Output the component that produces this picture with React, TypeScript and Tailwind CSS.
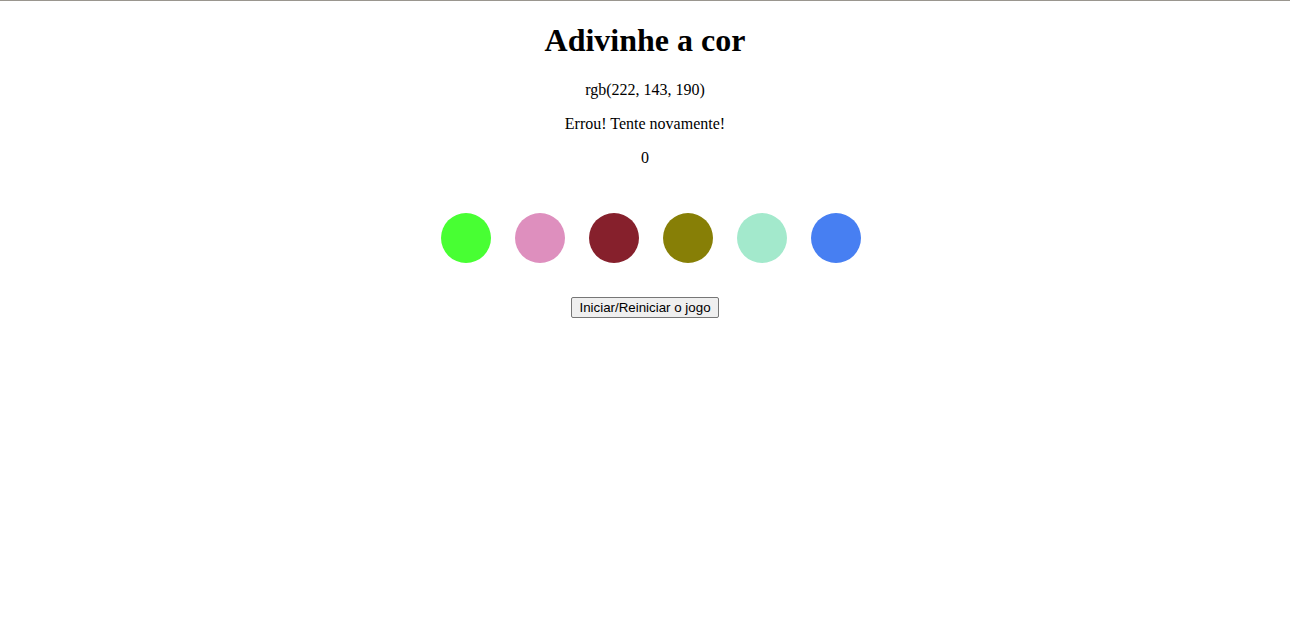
const colors = ["#48ff33", "#de8fbe", "#86202c", "#877f06", "#a3e9cc", "#477ff2"];

export default function App() {
  return (
    <div className="min-h-[637px] bg-white border-t border-[#9a968f] text-black font-['Liberation_Serif',serif] text-center">
      <h1 className="text-[32px] leading-[normal] font-bold mt-[21px] mb-[22px]">Adivinhe a cor</h1>
      <p className="text-[16px] leading-[normal]">rgb(222, 143, 190)</p>
      <p className="text-[16px] leading-[normal] mt-4">Errou! Tente novamente!</p>
      <p className="text-[16px] leading-[normal] mt-4">0</p>
      <div className="flex justify-center gap-6 pl-3 mt-[46px]">
        {colors.map((c) => (
          <div key={c} className="w-[50px] h-[50px] rounded-full cursor-pointer" style={{ backgroundColor: c }} />
        ))}
      </div>
      <div className="mt-[34px] flex justify-center">
        <button className="font-['Liberation_Sans',Arial,sans-serif] text-[13.33px] leading-[normal] px-[7px] py-[2px] bg-[#efefef] border border-[#767676] rounded-[2px]">
          Iniciar/Reiniciar o jogo
        </button>
      </div>
    </div>
  );
}
